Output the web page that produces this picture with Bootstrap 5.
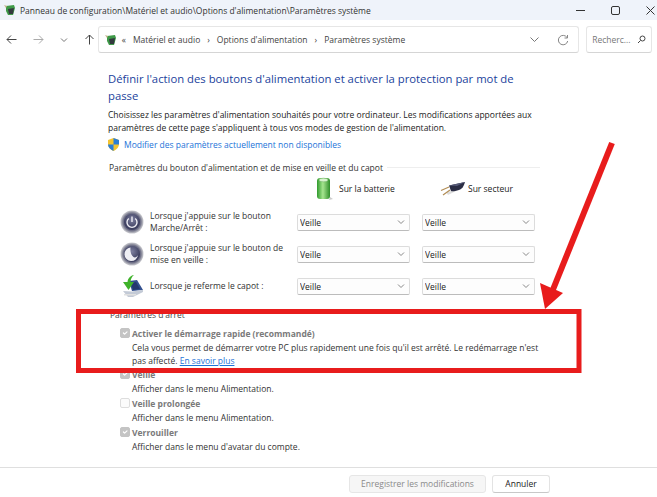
<!DOCTYPE html>
<html lang="fr"><head><meta charset="utf-8"><title>Paramètres système</title>
<link href="https://cdn.jsdelivr.net/npm/bootstrap@5.3.0/dist/css/bootstrap.min.css" rel="stylesheet">
<style>
html,body{height:100%}
body{width:657px;height:497px;overflow:hidden;position:relative;background:#fff;font-family:"Open Sans","Noto Sans","Liberation Sans",sans-serif;font-size:8.5px;line-height:13px;color:#222}
.tbar{height:20px;background:#eff3fa;padding-left:3px;gap:3px;color:#333}
.winbtns{margin-left:auto;gap:26px;padding-right:2px}
.navrow{height:39px;padding:6px 5px 0 6px}
.navbtns{width:92px;gap:16px;height:27px}
.addr{width:483px;height:27px;border:1px solid #e6e6e6;border-bottom-color:#d5d5d5;border-radius:3px;padding:0 9px 0 5px;color:#444}
.crumb{gap:7px}
.addr-end{margin-left:auto;gap:18px}
.srch{width:66px;height:27px;margin-left:7px;border:1px solid #e6e6e6;border-bottom-color:#d5d5d5;border-radius:3px;padding:0 5px;color:#777}
.pane{padding:11px 0 0 108px;height:408px}
.ttl{font-size:11.3px;line-height:17px;font-weight:400;color:#1b3f9c;margin:0 0 4px;width:430px}
.intro{margin:0 0 3px;width:430px;line-height:13px}
.lnk{color:#1d73d8;text-decoration:none}
.shield-row{gap:5px;height:14px}
.grp{width:431px;margin-left:1px;margin-top:10px;gap:4px;height:13px;color:#333}
.grp i{flex:1;height:1px;background:#eee}
.heads{height:29px;margin:0 0 3px 208px;width:250px}
.hcol{width:124px;gap:6px;flex:none}
.hcol.s{gap:2px}
.pw{height:32px;padding-left:12px;width:431px}
.pw-ico{width:24px;height:24px;flex:none;margin-right:6px}
.pw-lab{width:147px;flex:none;line-height:12.5px;color:#333}
.sel{width:113px;flex:none;height:17px;padding:0 0 0 2px;margin-right:12px;font-size:8.5px;line-height:15px;border:1px solid #dcdcdc;border-bottom-color:#bcbcbc;border-radius:2px;color:#222;background-color:#fdfdfd;background-image:url("data:image/svg+xml,%3Csvg xmlns='http://www.w3.org/2000/svg' viewBox='0 0 8 8'%3E%3Cpath d='M1 2.500l3 3 3-3' fill='none' stroke='%23888'/%3E%3C/svg%3E");background-size:8px 8px;background-position:right 4px center}
.stop{margin:6px 0 0 2px;height:13px;color:#444}
.opt{margin:0 0 0 12px;gap:2px;color:#333}
.opt .form-check-input{width:10px;height:10px;margin:1px 0 0;flex:none;border-radius:2px;border-color:#ddd;background-color:#fbfbfb;opacity:1}
.opt .form-check-input:checked{background-color:#c4c4c4;border-color:#c4c4c4;background-size:8px}
.opt b{display:block;font-weight:700;color:#7a7a7a;line-height:13.5px}
.opt>div{width:424px}
.opt a{color:#1d73d8}
.optw{width:440px;padding-bottom:2.5px}
.optw.first{margin-top:6px;padding-bottom:1.5px}
.foot{height:30px;border-top:1px solid #dfdfdf;padding:7px 107px 0 0;gap:6px;justify-content:flex-end}
.fbtn{height:18px;padding:0;font-size:8.5px;line-height:16px;border:1px solid #e3e3e3;border-radius:3px;background:#fff;color:#222}
.fbtn:disabled{width:137px;background:#f6f6f6;color:#8a8a8a;border-color:#e6e6e6;opacity:1}
.fbtn.c{width:58px;border-bottom-color:#c8c8c8}
.redmark{position:absolute;left:0;top:0;width:657px;height:497px;pointer-events:none}
</style></head>
<body>
<svg width="0" height="0" class="position-absolute"><defs>
<radialGradient id="ring"><stop offset=".6" stop-color="#5c5e78"/><stop offset=".78" stop-color="#75768c"/><stop offset=".9" stop-color="#a9aab4"/><stop offset="1" stop-color="#c9c9cf"/></radialGradient>
<radialGradient id="core" cy=".35"><stop offset="0" stop-color="#7e80a0"/><stop offset="1" stop-color="#3f4162"/></radialGradient>
<linearGradient id="b" x1="0" x2="1"><stop offset="0" stop-color="#2f9a2c"/><stop offset=".45" stop-color="#a6e58f"/><stop offset="1" stop-color="#2f8e2a"/></linearGradient>
</defs></svg>
<div class="tbar d-flex align-items-center">
<svg width="14" height="14" viewBox="0 0 14 14"><path d="M3 3l8-1 1 3-2 7H5L3 8z" fill="#3f9a48"/><path d="M5 6l6-1-1 6H6z" fill="#33393f"/><path d="M1 2l3 1-1 2z" fill="#c3b48a"/></svg>
<span>Panneau de configuration\Matériel et audio\Options d'alimentation\Paramètres système</span>
<div class="winbtns d-flex align-items-center">
<svg width="9" height="9" viewBox="0 0 9 9"><path d="M0 4.500h9" stroke="#333"/></svg>
<svg width="9" height="9" viewBox="0 0 9 9"><rect x=".5" y=".5" width="8" height="8" rx="1.500" fill="none" stroke="#333"/></svg>
<svg width="9" height="9" viewBox="0 0 9 9"><path d="M.5.5l8 8M8.500.5l-8 8" stroke="#333"/></svg>
</div></div>
<div class="navrow d-flex align-items-start">
<div class="navbtns d-flex align-items-center">
<svg width="11" height="11" viewBox="0 0 11 11"><path d="M10.500 5.500H1M5 1.500l-4 4 4 4" fill="none" stroke="#444"/></svg>
<svg width="11" height="11" viewBox="0 0 11 11"><path d="M.5 5.500H10M6 1.500l4 4-4 4" fill="none" stroke="#aaa"/></svg>
<svg width="8" height="8" viewBox="0 0 8 8"><path d="M1 2.500l3 3 3-3" fill="none" stroke="#777"/></svg>
<svg width="11" height="11" viewBox="0 0 11 11"><path d="M5.500 10.500V1M1.500 5l4-4 4 4" fill="none" stroke="#444"/></svg>
</div>
<div class="addr d-flex align-items-center">
<svg class="me-1" width="14" height="14" viewBox="0 0 14 14"><path d="M3 3l8-1 1 3-2 7H5L3 8z" fill="#3f9a48"/><path d="M5 6l6-1-1 6H6z" fill="#33393f"/><path d="M1 2l3 1-1 2z" fill="#c3b48a"/></svg>
<div class="crumb d-flex align-items-center"><span>«</span><span>Matériel et audio</span><span>›</span><span>Options d'alimentation</span><span>›</span><span>Paramètres système</span></div>
<div class="addr-end d-flex align-items-center">
<svg width="9" height="9" viewBox="0 0 9 9"><path d="M.5 2.500l4 4 4-4" fill="none" stroke="#777"/></svg>
<svg width="12" height="12" viewBox="0 0 12 12"><path d="M10 3.500A4.700 4.700 0 1 0 10.700 7M10.500 1v3h-3" fill="none" stroke="#888"/></svg>
</div></div>
<div class="srch d-flex align-items-center justify-content-between"><span>Recherc...</span>
<svg width="9" height="9" viewBox="0 0 9 9"><circle cx="5.500" cy="3.500" r="2.500" fill="none" stroke="#444"/><path d="M3.500 5.500L1 8" stroke="#444"/></svg></div>
</div>

<main class="pane">
<h1 class="ttl">Définir l'action des boutons d'alimentation et activer la protection par mot de passe</h1>
<p class="intro">Choisissez les paramètres d'alimentation souhaités pour votre ordinateur. Les modifications apportées aux paramètres de cette page s'appliquent à tous vos modes de gestion de l'alimentation.</p>
<div class="shield-row d-flex align-items-center">
<svg width="11" height="13" viewBox="0 0 11 13"><path d="M5.500 0L11 2v4c0 3.500-2.500 5.500-5.500 7C2.500 11.500 0 9.500 0 6V2z" fill="#f4c430"/><path d="M5.500 0L11 2v4.500H5.500zM5.500 6.500V13C2.500 11.500 0 9.500 0 6.500z" fill="#2a7fd6"/></svg>
<a class="lnk" href="#">Modifier des paramètres actuellement non disponibles</a></div>
<div class="grp d-flex align-items-center"><span>Paramètres du bouton d'alimentation et de mise en veille et du capot</span><i></i></div>
<div class="heads d-flex align-items-center">
<div class="hcol d-flex align-items-center">
<svg width="17" height="23" viewBox="0 0 17 23"><path d="M14 20l3 2-4 1z" fill="#ccc"/><rect x="1" y="1" width="13" height="21" rx="3" fill="url(#b)"/><ellipse cx="7.500" cy="3" rx="4.500" ry="1.800" fill="#d9f3cf" stroke="#6cae60" stroke-width=".5"/></svg>
<span>Sur la batterie</span></div>
<div class="hcol s d-flex align-items-center">
<svg width="26" height="16" viewBox="0 0 26 16"><path d="M6 11L12 10 20 8 8 14z" fill="#ddd"/><path d="M9 4.500L25 1c-1 4-3 7-6 8-4 1.300-7 1.500-8 1z" fill="#2b2d44"/><path d="M9 4.500L25 1 17 5z" fill="#565a78"/><path d="M9 6l-8 3.500M10 9l-7 5" stroke="#b28d55" stroke-width="1.200"/></svg>
<span>Sur secteur</span></div>
</div>
<div class="pw d-flex align-items-center">
<svg class="pw-ico" viewBox="0 0 24 24"><circle cx="12" cy="12" r="11.500" fill="url(#ring)"/><circle cx="12" cy="12" r="8" fill="url(#core)"/><path d="M8.800 8.500a5 5 0 1 0 6.400 0M12 6.500v5.500" fill="none" stroke="#eeeef4" stroke-width="1.400"/></svg>
<div class="pw-lab">Lorsque j'appuie sur le bouton Marche/Arrêt :</div>
<select class="form-select sel" aria-label="Batterie"><option>Veille</option></select><select class="form-select sel" aria-label="Secteur"><option>Veille</option></select></div>
<div class="pw d-flex align-items-center">
<svg class="pw-ico" viewBox="0 0 24 24"><circle cx="12" cy="12" r="11.500" fill="url(#ring)"/><circle cx="12" cy="12" r="8" fill="url(#core)"/><path d="M10.500 5.500a6.800 6.800 0 1 0 7.500 7.500c-1 2-3 3-4.500 2-2-1.500-3.500-5-3-9.500z" fill="#eeeef4"/></svg>
<div class="pw-lab">Lorsque j'appuie sur le bouton de mise en veille :</div>
<select class="form-select sel" aria-label="Batterie"><option>Veille</option></select><select class="form-select sel" aria-label="Secteur"><option>Veille</option></select></div>
<div class="pw d-flex align-items-center">
<svg class="pw-ico" viewBox="0 0 24 24"><path d="M9 7l8-1 6 10-11 1z" fill="#33508f"/><path d="M11 9l5-1 4 7-7 1z" fill="#24386f"/><path d="M3 17l9 .5 11-1.500v2l-10 5H8z" fill="#c3cad6"/><path d="M4 20h12v1.500H4z" fill="#e0e0e0"/><path d="M14 1c-3.500.5-6 3-6.500 7H3l5.500 8L14 8H10.500c.2-3 1.500-5.500 3.500-7z" fill="#3fb22a"/></svg>
<div class="pw-lab">Lorsque je referme le capot :</div>
<select class="form-select sel" aria-label="Batterie"><option>Veille</option></select><select class="form-select sel" aria-label="Secteur"><option>Veille</option></select></div>
<div class="stop">Paramètres d'arrêt</div>
<div class="optw first">
<div class="opt d-flex"><input class="form-check-input" type="checkbox" checked disabled aria-label="Démarrage rapide"><div><b>Activer le démarrage rapide (recommandé)</b><span class="d-block">Cela vous permet de démarrer votre PC plus rapidement une fois qu'il est arrêté. Le redémarrage n'est</span><span>pas affecté. </span><a href="#">En savoir plus</a></div></div>
</div>
<div class="optw"><div class="opt d-flex"><input class="form-check-input" type="checkbox" checked disabled aria-label="Veille"><div><b>Veille</b>Afficher dans le menu Alimentation.</div></div></div>
<div class="optw"><div class="opt d-flex"><input class="form-check-input" type="checkbox" disabled aria-label="Veille prolongée"><div><b>Veille prolongée</b>Afficher dans le menu Alimentation.</div></div></div>
<div class="optw"><div class="opt d-flex"><input class="form-check-input" type="checkbox" checked disabled aria-label="Verrouiller"><div><b>Verrouiller</b>Afficher dans le menu d'avatar du compte.</div></div></div>
</main>
<div class="foot d-flex">
<button class="btn fbtn" disabled>Enregistrer les modifications</button><button class="btn fbtn c">Annuler</button>
</div>
<svg class="redmark" viewBox="0 0 657 497"><rect x="78.500" y="311.500" width="500.500" height="59" fill="none" stroke="#e81c1c" stroke-width="5"/><path d="M612 143L552 292" stroke="#e81c1c" stroke-width="6"/><path d="M540 283l23 10-18 16z" fill="#e81c1c"/></svg>
<script src="https://cdn.jsdelivr.net/npm/bootstrap@5.3.0/dist/js/bootstrap.bundle.min.js"></script>
</body></html>
